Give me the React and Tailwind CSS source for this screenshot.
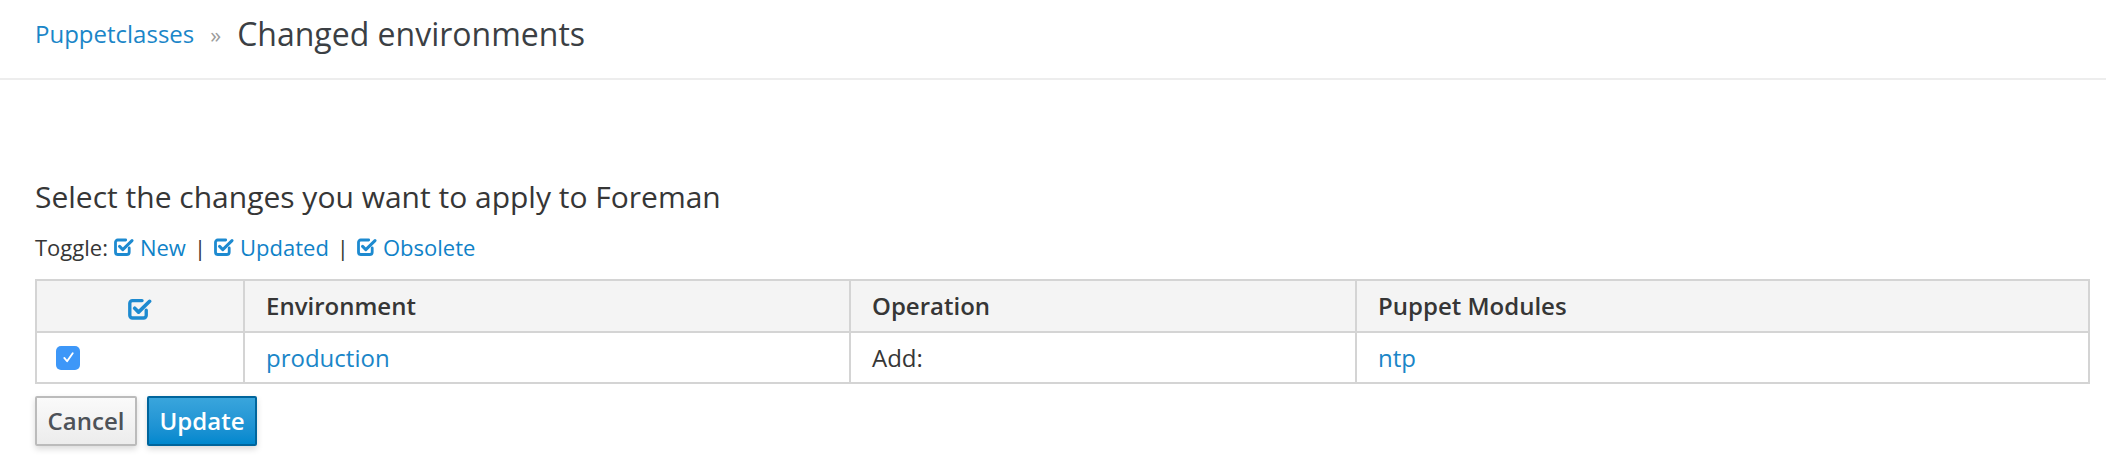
import React from "react";

const CheckSquare = ({ className = "" }) => (
  <svg viewBox="0 0 20 20" className={className} fill="none">
    <path
      d="M15.2 11v4.3a2.2 2.2 0 0 1-2.2 2.2H3.7a2.2 2.2 0 0 1-2.2-2.2V5.2A2.2 2.2 0 0 1 3.7 3h8"
      stroke="currentColor"
      strokeWidth="2.8"
      strokeLinecap="round"
    />
    <path
      d="M5.6 9.4l3.2 3.2L18 3.6"
      stroke="currentColor"
      strokeWidth="3"
      strokeLinecap="round"
      strokeLinejoin="round"
    />
  </svg>
);

const Checkbox = () => (
  <div className="w-[24px] h-[24px] rounded-[5px] bg-[#3d97f8] flex items-center justify-center">
    <svg viewBox="0 0 16 16" className="w-[15px] h-[15px]" fill="none">
      <path d="M3.5 8.5l3 3.5L12.5 3.5" stroke="white" strokeWidth="2" strokeLinecap="round" strokeLinejoin="round" />
    </svg>
  </div>
);

const ToggleLink = ({ label }) => (
  <a className="inline-flex items-center text-[#0f82c8] cursor-pointer">
    <CheckSquare className="w-[20px] h-[20px] mr-[6px] text-[#1d8ad0]" />
    {label}
  </a>
);

export default function App() {
  return (
    <div className="min-h-screen bg-white font-['Open_Sans',sans-serif] text-[#363636]">
      {/* Breadcrumb header */}
      <div className="h-[80px] border-b-2 border-[#ededed] px-[35px] flex items-center pb-[10px]">
        <a className="text-[24px] text-[#1a86c8] cursor-pointer leading-none">Puppetclasses</a>
        <span className="text-[22px] text-[#9c9c9c] mx-[16px] leading-none">»</span>
        <h1 className="text-[32px] text-[#3b3f44] leading-none">Changed environments</h1>
      </div>

      <div className="pl-[35px] pr-[16px]">
        <h2 className="text-[30px] leading-[36px] mt-[99px]">
          Select the changes you want to apply to Foreman
        </h2>

        <div className="text-[22px] leading-[30px] mt-[17px] flex items-center">
          <span className="mr-[6px]">Toggle:</span>
          <ToggleLink label="New" />
          <span className="mx-[8px]">|</span>
          <ToggleLink label="Updated" />
          <span className="mx-[8px]">|</span>
          <ToggleLink label="Obsolete" />
        </div>

        <table className="mt-[17px] w-full border-collapse border-2 border-[#d4d4d4] text-[24px]">
          <thead>
            <tr className="bg-[#f4f4f4] h-[52px]">
              <th className="w-[208px] border-2 border-[#d4d4d4] text-center">
                <CheckSquare className="w-[24px] h-[24px] inline-block text-[#1d8ad0]" />
              </th>
              <th className="w-[606px] border-2 border-[#d4d4d4] text-left font-semibold px-[21px]">Environment</th>
              <th className="w-[506px] border-2 border-[#d4d4d4] text-left font-semibold px-[21px]">Operation</th>
              <th className="border-2 border-[#d4d4d4] text-left font-semibold px-[21px]">Puppet Modules</th>
            </tr>
          </thead>
          <tbody>
            <tr className="h-[51px]">
              <td className="border-2 border-[#d4d4d4] pl-[19px]">
                <Checkbox />
              </td>
              <td className="border-2 border-[#d4d4d4] px-[21px]">
                <a className="text-[#1a86c8] cursor-pointer">production</a>
              </td>
              <td className="border-2 border-[#d4d4d4] px-[21px]">Add:</td>
              <td className="border-2 border-[#d4d4d4] px-[21px]">
                <a className="text-[#1a86c8] cursor-pointer">ntp</a>
              </td>
            </tr>
          </tbody>
        </table>

        <div className="mt-[12px] flex gap-[10px]">
          <button className="h-[50px] w-[102px] rounded-[2px] border-2 border-[#bbbbbb] bg-gradient-to-b from-[#fafafa] to-[#ececec] text-[24px] font-semibold text-[#4d5258] shadow-[0_3px_6px_rgba(0,0,0,0.15)]">
            Cancel
          </button>
          <button className="h-[50px] w-[110px] rounded-[2px] border-2 border-[#00659c] bg-gradient-to-b from-[#39a5dc] to-[#0088ce] text-[24px] font-semibold text-white shadow-[0_3px_6px_rgba(0,0,0,0.15)]">
            Update
          </button>
        </div>
      </div>
    </div>
  );
}
